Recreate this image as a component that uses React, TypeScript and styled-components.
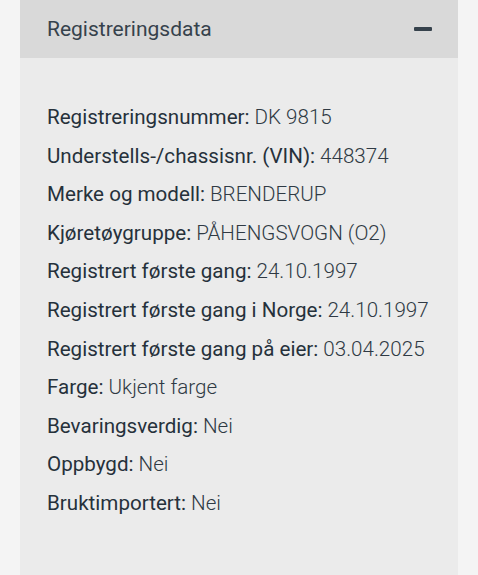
import * as React from 'react';
import styled, { createGlobalStyle } from 'styled-components';

type Field = {
  label: string;
  value: string;
};

const fields: Field[] = [
  { label: 'Registreringsnummer', value: 'DK 9815' },
  { label: 'Understells-/chassisnr. (VIN)', value: '448374' },
  { label: 'Merke og modell', value: 'BRENDERUP' },
  { label: 'Kjøretøygruppe', value: 'PÅHENGSVOGN (O2)' },
  { label: 'Registrert første gang', value: '24.10.1997' },
  { label: 'Registrert første gang i Norge', value: '24.10.1997' },
  { label: 'Registrert første gang på eier', value: '03.04.2025' },
  { label: 'Farge', value: 'Ukjent farge' },
  { label: 'Bevaringsverdig', value: 'Nei' },
  { label: 'Oppbygd', value: 'Nei' },
  { label: 'Bruktimportert', value: 'Nei' },
];

const GlobalStyle = createGlobalStyle`
  html, body {
    margin: 0;
    padding: 0;
    background: #f4f4f4;
  }

  body {
    font-family: Roboto, 'Noto Sans', sans-serif;
    color: #2c3741;
  }
`;

const Page = styled.div`
  padding: 0 20px;
  min-height: 575px;
`;

const Card = styled.section`
  background: #ebebeb;
  min-height: 575px;
`;

const Header = styled.div`
  display: flex;
  align-items: center;
  justify-content: space-between;
  height: 58px;
  padding: 0 27px;
  background: #d9d9d9;
`;

const Title = styled.h2`
  margin: 0;
  font-size: 21px;
  font-weight: 400;
  color: #36424c;
`;

const Collapse = styled.span`
  display: block;
  width: 18px;
  height: 4px;
  margin-right: -1px;
  border-radius: 1px;
  background: #36424c;
`;

const List = styled.dl`
  margin: 0;
  padding: 40px 27px 0;
`;

const Row = styled.div`
  white-space: nowrap;
  line-height: 38.6px;
  font-size: 20.6px;
`;

const Label = styled.dt`
  display: inline;
  font-weight: 400;
  color: #26313b;
`;

const Value = styled.dd`
  display: inline;
  margin: 0 0 0 5px;
  font-weight: 300;
  color: #2f3a44;
`;

export default function App() {
  return (
    <>
      <GlobalStyle />
      <Page>
        <Card>
          <Header>
            <Title>Registreringsdata</Title>
            <Collapse />
          </Header>
          <List>
            {fields.map((field) => (
              <Row key={field.label}>
                <Label>{field.label}:</Label>
                <Value>{field.value}</Value>
              </Row>
            ))}
          </List>
        </Card>
      </Page>
    </>
  );
}
